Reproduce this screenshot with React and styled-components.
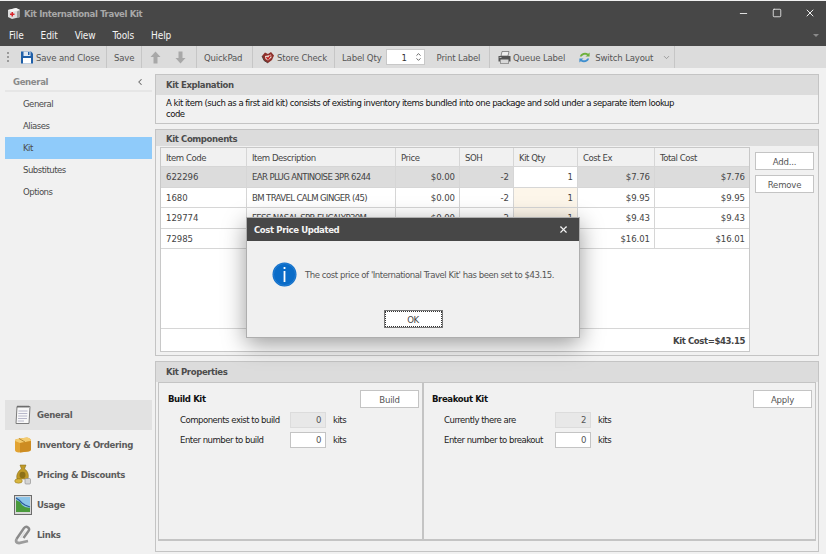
import React from 'react';
import styled, { createGlobalStyle } from 'styled-components';
import { Minus, Square, X, ChevronLeft, ChevronDown, ChevronUp } from 'lucide-react';

const GlobalStyle = createGlobalStyle`
  html, body {
    margin: 0;
    padding: 0;
    background: #f0f0f0;
    overflow: hidden;
  }
  * { box-sizing: border-box; }
  svg { flex: none; }
`;

const Page = styled.div`
  position: relative;
  width: 826px;
  height: 554px;
  overflow: hidden;
  background: #f1f1f1;
  font-family: "DejaVu Sans Condensed", "Liberation Sans", Arial, sans-serif;
  font-size: 9.5px;
  letter-spacing: -0.5px;
  color: #222;
  padding-top: 1px;
`;

const TitleArea = styled.div`
  height: 45px;
  background: #474747;
  color: #fff;
`;

const TitleRow = styled.div`
  height: 24px;
  display: flex;
  align-items: center;
  padding-left: 7px;
`;

const TitleText = styled.span`
  margin-left: 3px;
  color: #a8a8a8;
  font-weight: bold;
  letter-spacing: -0.35px;
  flex: 1;
`;

const WinButton = styled.span`
  width: 33px;
  display: flex;
  justify-content: center;
  color: #eee;
`;

const MenuRow = styled.div`
  height: 21px;
  display: flex;
  align-items: center;
  padding-left: 9px;
  gap: 17px;
  font-size: 10px;
  letter-spacing: -0.1px;
  color: #f4f4f4;
`;

const MenuMore = styled.span`
  margin-left: auto;
  margin-right: 7px;
  width: 0;
  height: 0;
  border-left: 3px solid transparent;
  border-right: 3px solid transparent;
  border-top: 3px solid #8a8a8a;
`;

const Toolbar = styled.div`
  height: 22px;
  background: #dcdcdc;
  display: flex;
  align-items: stretch;
  color: #555;
  letter-spacing: -0.15px;
`;

const Grip = styled.div`
  width: 16px;
  display: flex;
  flex-direction: column;
  justify-content: center;
  align-items: center;
  gap: 2px;
  span { width: 2px; height: 2px; background: #9a9a9a; }
`;

const ToolGroup = styled.div`
  width: ${(p) => p.$w}px;
  display: flex;
  align-items: center;
  gap: ${(p) => p.$gap ?? 4}px;
  padding-left: ${(p) => p.$pad ?? 7}px;
  border-right: 1px solid #c6c6c6;
  white-space: nowrap;
`;

const ToolLabel = styled.span`
  display: flex;
  margin-left: ${(p) => p.$ml || 0}px;
`;

const QtyBox = styled.div`
  width: 39px;
  height: 16px;
  background: #fff;
  border: 1px solid #c8c8c8;
  display: flex;
  align-items: center;
  justify-content: space-between;
  color: #333;
  padding-left: 15px;
`;

const Spin = styled.div`
  display: flex;
  flex-direction: column;
  align-items: center;
  width: 10px;
  color: #555;
  svg { display: block; margin: -1px 0; }
`;

const Content = styled.div`
  height: 486px;
  display: flex;
`;

const Sidebar = styled.div`
  width: 155px;
  padding: 5px 3px 0 5px;
  display: flex;
  flex-direction: column;
`;

const SideHead = styled.div`
  height: 19px;
  display: flex;
  align-items: center;
  justify-content: space-between;
  padding: 0 7px 0 8px;
  border-bottom: 2px solid #e6e6e6;
  color: #8a8a8a;
  font-weight: bold;
  letter-spacing: -0.35px;
  margin-bottom: 1px;
`;

const SideList = styled.div`
  display: flex;
  flex-direction: column;
  flex: 1;
`;

const SideItem = styled.div`
  height: 22px;
  display: flex;
  align-items: center;
  padding-left: 18px;
  padding-bottom: 1px;
  color: #4a4a4a;
  background: ${(p) => (p.$active ? '#8fcbfa' : 'transparent')};
`;

const NavList = styled.div`
  display: flex;
  flex-direction: column;
  margin-bottom: 4px;
`;

const NavItem = styled.div`
  height: 30px;
  display: flex;
  align-items: center;
  gap: 5px;
  padding-left: 9px;
  padding-bottom: 1px;
  font-weight: bold;
  letter-spacing: -0.33px;
  color: #5c5c5c;
  background: ${(p) => (p.$active ? '#e2e2e2' : 'transparent')};
`;

const Main = styled.div`
  width: 664px;
  padding-top: 6px;
  display: flex;
  flex-direction: column;
  gap: 5px;
`;

const Panel = styled.div`
  border: 1px solid #c4c4c4;
  height: ${(p) => p.$h}px;
  display: flex;
  flex-direction: column;
  background: #f1f1f1;
`;

const PanelHead = styled.div`
  height: ${(p) => p.$h}px;
  flex: none;
  background: #dcdcdc;
  display: flex;
  align-items: center;
  padding: 0 0 ${(p) => p.$lift || 0}px 10px;
  font-weight: bold;
  letter-spacing: -0.4px;
  color: #4c4c4c;
`;

const Explain = styled.div`
  padding: 2px 0 0 10px;
  line-height: 11px;
  color: #111;
`;

const CompBody = styled.div`
  flex: 1;
  display: flex;
  gap: 5px;
  padding: 1px 4px 3px 4px;
`;

const Grid = styled.div`
  width: 590px;
  border: 1px solid #c8c8c8;
  background: #fff;
  display: flex;
  flex-direction: column;
`;

const GridRow = styled.div`
  display: grid;
  grid-template-columns: 86px 149px 64px 54px 64px 77px 1fr;
  height: ${(p) => p.$h || 20.5}px;
  background: ${(p) => (p.$head ? '#f1f1f1' : p.$sel ? '#dcdcdc' : '#fff')};
  border-bottom: 1px solid #d6d6d6;
  color: #444;
  letter-spacing: ${(p) => (p.$head ? -0.45 : -0.05)}px;
`;

const Cell = styled.div`
  display: flex;
  align-items: center;
  justify-content: ${(p) => (p.$right ? 'flex-end' : 'flex-start')};
  padding: 0 ${(p) => (p.$right ? 4 : 5)}px;
  border-right: 1px solid #d6d6d6;
  background: ${(p) => p.$bg || 'transparent'};
  white-space: nowrap;
  overflow: hidden;
  letter-spacing: ${(p) => (p.$upper ? '-0.62px' : 'inherit')};
  &:last-child { border-right: 0; }
`;

const GridFill = styled.div`
  flex: 1;
`;

const GridFoot = styled.div`
  height: 23px;
  border-top: 1px solid #d6d6d6;
  display: flex;
  align-items: center;
  justify-content: flex-end;
  padding-right: 4px;
  font-weight: bold;
  letter-spacing: -0.4px;
  color: #444;
`;

const SideButtons = styled.div`
  display: flex;
  flex-direction: column;
  gap: 5px;
  padding-top: 5px;
`;

const Btn = styled.div`
  width: 59px;
  height: 18px;
  background: #fff;
  border: 1px solid #c4c4c4;
  display: flex;
  align-items: center;
  justify-content: center;
  color: #555;
  letter-spacing: -0.2px;
`;

const PropsBody = styled.div`
  flex: 1;
  margin: 0 2px 10px 2px;
  border: 1px solid #c4c4c4;
  border-bottom-width: 2px;
  display: grid;
  grid-template-columns: 265px 1fr;
`;

const PropsCol = styled.div`
  padding: 7px 3px 0 ${(p) => (p.$split ? 9 : 8)}px;
  border-right: ${(p) => (p.$split ? '2px solid #c4c4c4' : '0')};
  color: #222;
`;

const PropsTop = styled.div`
  display: flex;
  justify-content: space-between;
  height: 20px;
`;

const PropsTitle = styled.div`
  font-weight: bold;
  letter-spacing: -0.4px;
  color: #111;
  padding-top: 3px;
`;

const FieldRow = styled.div`
  display: flex;
  align-items: center;
  height: 20px;
  padding-left: 12px;
  padding-bottom: 1px;
  white-space: nowrap;
`;

const FieldLabel = styled.span`
  width: ${(p) => p.$w}px;
`;

const NumBox = styled.div`
  width: 36px;
  height: 16px;
  border: 1px solid ${(p) => (p.$off ? '#dcdcdc' : '#c4c4c4')};
  background: ${(p) => (p.$off ? '#e8e8e8' : '#fff')};
  display: flex;
  align-items: center;
  justify-content: flex-end;
  padding-right: 4px;
  margin-right: 7px;
  color: #555;
`;

const Dialog = styled.div`
  position: absolute;
  left: 246px;
  top: 217px;
  width: 334px;
  height: 121px;
  background: #f0f0f0;
  border: 1px solid #aeaeae;
  box-shadow: 0 6px 22px rgba(0, 0, 0, 0.4);
  display: flex;
  flex-direction: column;
`;

const DialogHead = styled.div`
  height: 23px;
  background: #474747;
  color: #f4f4f4;
  font-weight: bold;
  letter-spacing: -0.4px;
  display: flex;
  align-items: center;
  justify-content: space-between;
  padding: 0 10px 0 7px;
`;

const DialogBody = styled.div`
  flex: 1;
  display: flex;
  align-items: center;
  gap: 8px;
  padding: 0 0 3px 25px;
  color: #555;
  letter-spacing: -0.45px;
  white-space: nowrap;
`;

const DialogFoot = styled.div`
  display: flex;
  justify-content: center;
  padding-bottom: 9px;
`;

const OkButton = styled.div`
  width: 59px;
  height: 18px;
  background: #fff;
  border: 1px solid #777;
  outline: 1px dotted #333;
  outline-offset: -2px;
  display: flex;
  align-items: center;
  justify-content: center;
  color: #444;
`;

const KitIcon = () => (
  <svg width="14" height="14" viewBox="0 0 14 14">
    <path d="M1 4 L9 2 L13 4 V11 L5 13 L1 11 Z" fill="#dcdcdc" />
    <path d="M9 2 L13 4 L5 6 L1 4 Z" fill="#f4f4f4" />
    <path d="M10 5.5 L13 4 V11 L10 12 Z" fill="#9a9a9a" />
    <path d="M3 7.5 h1.5 V6 h1.5 v1.5 H7.5 V9 H6 v1.5 H4.5 V9 H3 Z" fill="#d8232a" />
  </svg>
);

const SaveIcon = () => (
  <svg width="12" height="13" viewBox="0 0 12 13">
    <path d="M0 0.5 H10 L12 2.5 V12.5 H0 Z" fill="#1f5fa8" />
    <rect x="2.5" y="0.5" width="7" height="4.5" fill="#dfe8f2" />
    <rect x="2" y="7" width="8" height="5.5" fill="#ffffff" />
    <rect x="7" y="1" width="1.5" height="3" fill="#1f5fa8" />
  </svg>
);

const BlockArrow = ({ down }) => (
  <svg width="11" height="13" viewBox="0 0 11 13">
    <path d={down ? 'M3.5 0.5 H7.5 V7 H10.5 L5.5 12.5 L0.5 7 H3.5 Z' : 'M3.5 12.5 H7.5 V6 H10.5 L5.5 0.5 L0.5 6 H3.5 Z'} fill="#a8a8a8" />
  </svg>
);

const StoreCheckIcon = () => (
  <svg width="14" height="13" viewBox="0 0 14 13">
    <path d="M1 5 L4 1.5 L7 3 L10 1 L13 4.5 L11 9 L7 12 L3 9.5 Z" fill="#8c2f2a" />
    <path d="M4 5 L7 4.5 L10 3.5 L10.5 6.5 L7 9.5 L4.5 8 Z" fill="#efe4dc" />
    <path d="M5.5 6 L7 8 L9.5 4.5" fill="none" stroke="#c02020" strokeWidth="1.4" />
    <path d="M1 5 L3 9.5 L7 12" fill="none" stroke="#4a3a36" strokeWidth="0.9" />
  </svg>
);

const PrinterIcon = () => (
  <svg width="13" height="13" viewBox="0 0 13 13">
    <path d="M4 0.5 H11 L10 5 H3 Z" fill="#eeeeee" stroke="#666" strokeWidth="0.7" />
    <path d="M0.5 5 H12.5 V10.5 H11 V12.5 H2 V10.5 H0.5 Z" fill="#555" />
    <rect x="2.5" y="8.5" width="8" height="3.5" fill="#d8d8d8" />
    <rect x="1.5" y="6" width="2" height="1" fill="#bbb" />
  </svg>
);

const SwitchIcon = () => (
  <svg width="13" height="13" viewBox="0 0 14 14">
    <path d="M2 6 C3 2 8 1 11 3 L12.5 1.5 V6 H8 L9.8 4.5 C8 3.4 5 4 4 6 Z" fill="#6cb03a" />
    <path d="M12 8 C11 12 6 13 3 11 L1.5 12.5 V8 H6 L4.2 9.5 C6 10.6 9 10 10 8 Z" fill="#3f8fcf" />
  </svg>
);

const PageIcon = () => (
  <svg width="18" height="20" viewBox="0 0 18 20">
    <path d="M3 1.5 H16 L15 18.5 H2 Z" fill="#f8f8f8" stroke="#7c7c7c" />
    <path d="M4 0.5 V3 M6 0.5 V3 M8 0.5 V3 M10 0.5 V3 M12 0.5 V3 M14 0.5 V3" stroke="#555" strokeWidth="0.8" />
    <path d="M4.5 6 H13.5 M4.3 8.5 H13.3 M4.2 11 H13.2 M4 13.5 H13 M3.8 16 H10" stroke="#b0b0c4" strokeWidth="0.9" />
  </svg>
);

const BoxIcon = () => (
  <svg width="18" height="16" viewBox="0 0 18 16">
    <path d="M1 4 Q1 2 3 2 L13 0.5 Q17 1 17 4 V12 Q17 14 14 14.5 L5 15.5 Q1 15 1 13 Z" fill="#e2a332" />
    <path d="M1 4 Q1 2 3 2 L13 0.5 Q17 1 17 4 L6 6 Z" fill="#f4cc70" />
    <path d="M6 6 L17 4 V12 Q17 14 14 14.5 L6 15.5 Z" fill="#cd8c22" />
    <path d="M5 1.5 L11 5" stroke="#b88a30" strokeWidth="1" />
  </svg>
);

const MoneyIcon = () => (
  <svg width="18" height="21" viewBox="0 0 18 21">
    <path d="M6 1 H12 L10.5 5 C14 7 15 11 14 15 H3 C2 11 4 7 7.5 5 Z" fill="#c09a28" stroke="#7d6414" strokeWidth="0.5" />
    <ellipse cx="8.5" cy="11" rx="3" ry="3.3" fill="#8c7018" />
    <ellipse cx="4.5" cy="17" rx="3.8" ry="2.2" fill="#d8b640" stroke="#8c7018" strokeWidth="0.5" />
    <rect x="11" y="14.5" width="5.5" height="5.5" rx="1" fill="#d4d4d4" stroke="#888" strokeWidth="0.6" />
  </svg>
);

const ChartIcon = () => (
  <svg width="18" height="20" viewBox="0 0 18 20">
    <rect x="0.5" y="0.5" width="17" height="19" fill="#d8d8d8" stroke="#6c6c6c" />
    <rect x="2" y="2" width="14" height="15" fill="#8cc4e8" />
    <path d="M2 5 L6 7 L8 10 L11 12 L16 13 V17 H2 Z" fill="#4a9a3c" />
    <path d="M2 3 L5 5 L8 8 L11 10 L16 12" fill="none" stroke="#2a5a9a" strokeWidth="1.2" />
  </svg>
);

const LinkIcon = () => (
  <svg width="18" height="20" viewBox="0 0 18 20">
    <path d="M2.5 14 L10 3 Q12 1 14 2.5 Q16 4 14.5 6 L9.5 13" fill="none" stroke="#8a8a8a" strokeWidth="2.4" />
    <path d="M2.5 14 Q1 18 5 18 L14 16" fill="none" stroke="#9c9c9c" strokeWidth="2.8" />
    <path d="M6.5 13 L11 6.5" stroke="#dcdcdc" strokeWidth="1.2" />
  </svg>
);

const InfoIcon = () => (
  <svg width="25" height="25" viewBox="0 0 25 25">
    <circle cx="12.5" cy="12.5" r="12" fill="#0a6cc8" />
    <circle cx="12.5" cy="12.5" r="11" fill="none" stroke="#3a8ad8" strokeWidth="0.6" />
    <rect x="11.6" y="5" width="1.8" height="2" fill="#fff" />
    <rect x="11.6" y="9" width="1.8" height="11" fill="#fff" />
  </svg>
);

const rows = [
  { code: '622296', desc: 'EAR PLUG ANTINOISE 3PR 6244', price: '$0.00', soh: '-2', qty: '1', cost: '$7.76', total: '$7.76', sel: true, qtyBg: '#ffffff' },
  { code: '1680', desc: 'BM TRAVEL CALM GINGER (45)', price: '$0.00', soh: '-2', qty: '1', cost: '$9.95', total: '$9.95', qtyBg: '#fdf6ea' },
  { code: '129774', desc: 'FESS NASAL SPR EUCALYP30M', price: '$0.00', soh: '-2', qty: '1', cost: '$9.43', total: '$9.43', qtyBg: '#fdf6ea' },
  { code: '72985', desc: '', price: '', soh: '', qty: '', cost: '$16.01', total: '$16.01' },
];

const menus = ['File', 'Edit', 'View', 'Tools', 'Help'];
const sideItems = ['General', 'Aliases', 'Kit', 'Substitutes', 'Options'];
const headers = ['Item Code', 'Item Description', 'Price', 'SOH', 'Kit Qty', 'Cost Ex', 'Total Cost'];

const App = () => (
  <Page>
    <GlobalStyle />
    <TitleArea>
      <TitleRow>
        <KitIcon />
        <TitleText>Kit International Travel Kit</TitleText>
        <WinButton><Minus size={11} /></WinButton>
        <WinButton><Square size={10} strokeWidth={2} /></WinButton>
        <WinButton><X size={12} /></WinButton>
      </TitleRow>
      <MenuRow>
        {menus.map((m) => <span key={m}>{m}</span>)}
        <MenuMore />
      </MenuRow>
    </TitleArea>

    <Toolbar>
      <Grip><span /><span /><span /></Grip>
      <ToolGroup $w={91} $pad={5} $gap={3}><SaveIcon /><span>Save and Close</span></ToolGroup>
      <ToolGroup $w={35}><span>Save</span></ToolGroup>
      <ToolGroup $w={55} $pad={8} $gap={14}>
        <BlockArrow />
        <BlockArrow down />
      </ToolGroup>
      <ToolGroup $w={56}><span>QuickPad</span></ToolGroup>
      <ToolGroup $w={82} $pad={8} $gap={2}><StoreCheckIcon /><span>Store Check</span></ToolGroup>
      <ToolGroup $w={155}>
        <span>Label Qty</span>
        <QtyBox>
          1
          <Spin><ChevronUp size={7} strokeWidth={3} /><ChevronDown size={7} strokeWidth={3} /></Spin>
        </QtyBox>
        <ToolLabel $ml={8}>Print Label</ToolLabel>
      </ToolGroup>
      <ToolGroup $w={185} $pad={8} $gap={2}>
        <PrinterIcon />
        <span>Queue Label</span>
        <ToolLabel $ml={11}><SwitchIcon /></ToolLabel>
        <ToolLabel $ml={2}>Switch Layout</ToolLabel>
        <ToolLabel $ml={7}><ChevronDown size={9} color="#888" /></ToolLabel>
      </ToolGroup>
    </Toolbar>

    <Content>
      <Sidebar>
        <SideHead>General<ChevronLeft size={10} strokeWidth={2.5} color="#666" /></SideHead>
        <SideList>
          {sideItems.map((s) => <SideItem key={s} $active={s === 'Kit'}>{s}</SideItem>)}
        </SideList>
        <NavList>
          <NavItem $active><PageIcon />General</NavItem>
          <NavItem><BoxIcon />Inventory &amp; Ordering</NavItem>
          <NavItem><MoneyIcon />Pricing &amp; Discounts</NavItem>
          <NavItem><ChartIcon />Usage</NavItem>
          <NavItem><LinkIcon />Links</NavItem>
        </NavList>
      </Sidebar>

      <Main>
        <Panel $h={50}>
          <PanelHead $h={20} $lift={1}>Kit Explanation</PanelHead>
          <Explain>
            A kit item (such as a first aid kit) consists of existing inventory items bundled into one package and sold under a separate item lookup
            <br />
            code
          </Explain>
        </Panel>

        <Panel $h={227}>
          <PanelHead $h={16}>Kit Components</PanelHead>
          <CompBody>
            <Grid>
              <GridRow $head $h={19}>
                {headers.map((h) => <Cell key={h}>{h}</Cell>)}
              </GridRow>
              {rows.map((r) => (
                <GridRow key={r.code} $sel={r.sel}>
                  <Cell>{r.code}</Cell>
                  <Cell $upper>{r.desc}</Cell>
                  <Cell $right>{r.price}</Cell>
                  <Cell $right>{r.soh}</Cell>
                  <Cell $right $bg={r.qtyBg}>{r.qty}</Cell>
                  <Cell $right>{r.cost}</Cell>
                  <Cell $right>{r.total}</Cell>
                </GridRow>
              ))}
              <GridFill />
              <GridFoot>Kit Cost=$43.15</GridFoot>
            </Grid>
            <SideButtons>
              <Btn>Add...</Btn>
              <Btn>Remove</Btn>
            </SideButtons>
          </CompBody>
        </Panel>

        <Panel $h={191}>
          <PanelHead $h={20} $lift={1}>Kit Properties</PanelHead>
          <PropsBody>
            <PropsCol $split>
              <PropsTop>
                <PropsTitle>Build Kit</PropsTitle>
                <Btn>Build</Btn>
              </PropsTop>
              <FieldRow>
                <FieldLabel $w={110}>Components exist to build</FieldLabel>
                <NumBox $off>0</NumBox>kits
              </FieldRow>
              <FieldRow>
                <FieldLabel $w={110}>Enter number to build</FieldLabel>
                <NumBox>0</NumBox>kits
              </FieldRow>
            </PropsCol>
            <PropsCol>
              <PropsTop>
                <PropsTitle>Breakout Kit</PropsTitle>
                <Btn>Apply</Btn>
              </PropsTop>
              <FieldRow>
                <FieldLabel $w={111}>Currently there are</FieldLabel>
                <NumBox $off>2</NumBox>kits
              </FieldRow>
              <FieldRow>
                <FieldLabel $w={111}>Enter number to breakout</FieldLabel>
                <NumBox>0</NumBox>kits
              </FieldRow>
            </PropsCol>
          </PropsBody>
        </Panel>
      </Main>
    </Content>

    <Dialog>
      <DialogHead>Cost Price Updated<X size={11} strokeWidth={2.5} /></DialogHead>
      <DialogBody>
        <InfoIcon />
        The cost price of 'International Travel Kit' has been set to $43.15.
      </DialogBody>
      <DialogFoot><OkButton>OK</OkButton></DialogFoot>
    </Dialog>
  </Page>
);

export default App;
